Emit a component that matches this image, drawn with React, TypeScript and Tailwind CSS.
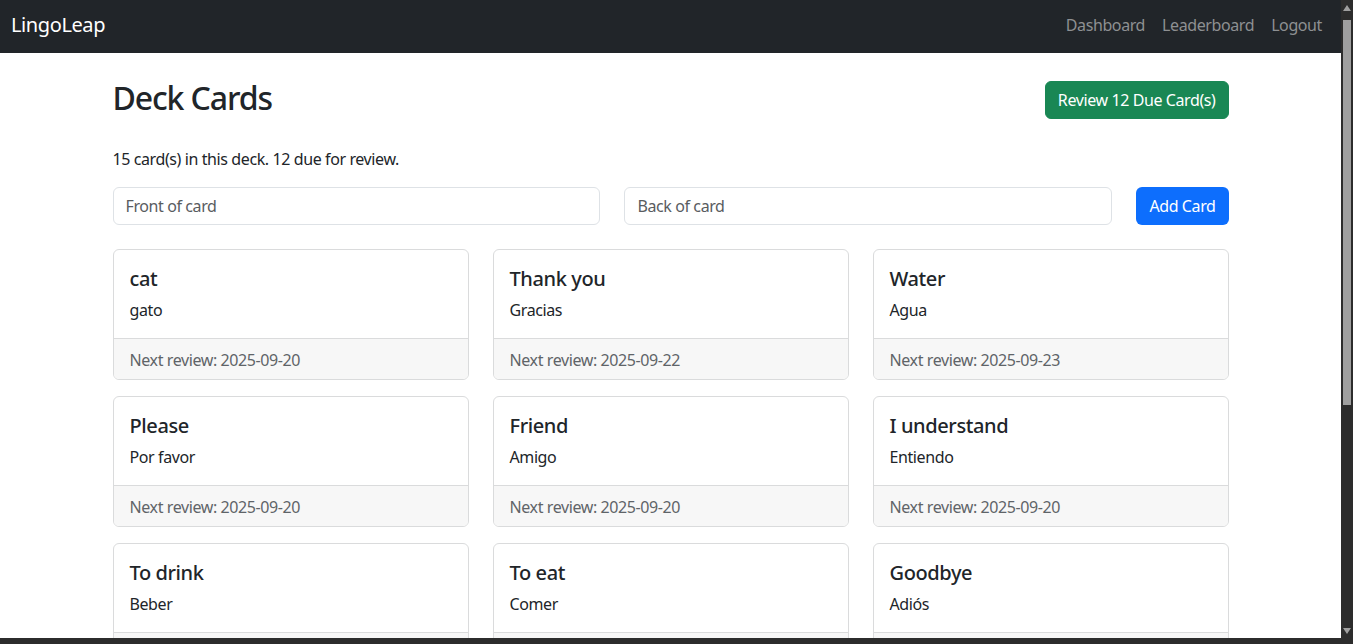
import React from 'react'

type Card = { front: string; back: string; next: string }

const cards: Card[] = [
  { front: 'cat', back: 'gato', next: '2025-09-20' },
  { front: 'Thank you', back: 'Gracias', next: '2025-09-22' },
  { front: 'Water', back: 'Agua', next: '2025-09-23' },
  { front: 'Please', back: 'Por favor', next: '2025-09-20' },
  { front: 'Friend', back: 'Amigo', next: '2025-09-20' },
  { front: 'I understand', back: 'Entiendo', next: '2025-09-20' },
  { front: 'To drink', back: 'Beber', next: '2025-09-20' },
  { front: 'To eat', back: 'Comer', next: '2025-09-20' },
  { front: 'Goodbye', back: 'Adiós', next: '2025-09-20' },
]

function Navbar() {
  return (
    <nav className="h-[53px] bg-[#212529] flex items-center justify-between pl-[11px] pr-[19px] pb-[3px] shrink-0">
      <span className="text-[20px] text-white leading-none">LingoLeap</span>
      <div className="flex items-center gap-[17px] text-[16px] text-[#8e9092]">
        <a>Dashboard</a>
        <a>Leaderboard</a>
        <a>Logout</a>
      </div>
    </nav>
  )
}

function DeckCard({ card }: { card: Card }) {
  return (
    <div className="border border-[#dadbdc] rounded-[6px] overflow-hidden bg-white">
      <div className="p-4">
        <h5 className="text-[20px] font-medium leading-[1.2] mt-[1px] mb-[7px] text-[#212529]">{card.front}</h5>
        <p className="text-[16px] leading-6 text-[#212529]">{card.back}</p>
      </div>
      <div className="border-t border-[#dadbdc] bg-[#f7f7f7] px-4 pt-[9px] pb-[7px] text-[16px] leading-6 text-[#5f6468]">
        Next review: {card.next}
      </div>
    </div>
  )
}

function Scrollbar() {
  return (
    <div className="w-[12px] h-[638px] bg-[#2c2c2c] flex flex-col items-center shrink-0">
      <div className="mt-[5px] w-0 h-0 border-l-[4px] border-r-[4px] border-b-[6px] border-l-transparent border-r-transparent border-b-[#9f9f9f]" />
      <div className="mt-[9px] w-[8px] h-[385px] bg-[#9f9f9f]" />
      <div className="flex-1" />
      <div className="mb-[4px] w-0 h-0 border-l-[4px] border-r-[4px] border-t-[6px] border-l-transparent border-r-transparent border-t-[#9f9f9f]" />
    </div>
  )
}

export default function App() {
  return (
    <div
      className="w-full h-[644px] overflow-hidden flex flex-col tracking-[-0.025em]"
      style={{ fontFamily: '"Segoe UI", "Noto Sans", sans-serif' }}
    >
      <div className="flex flex-1 min-h-0">
        <div className="flex-1 min-w-0 flex flex-col overflow-hidden bg-white">
          <Navbar />
          <main className="w-[1140px] mx-auto px-3 pt-6">
            <div className="flex items-center justify-between mb-6">
              <h1 className="text-[32px] font-medium leading-[1.2] mt-[2px] mb-[6px] text-[#212529] tracking-[-0.035em]">
                Deck Cards
              </h1>
              <button className="bg-[#198754] text-white text-[16px] leading-6 px-3 py-[6px] rounded-[6px] border border-[#198754] tracking-[-0.025em]">
                Review 12 Due Card(s)
              </button>
            </div>
            <p className="text-[16px] leading-6 text-[#212529] mb-4">15 card(s) in this deck. 12 due for review.</p>
            <div className="flex gap-6 mb-6">
              <input
                className="flex-1 min-w-0 h-[38px] border border-[#dee2e6] rounded-[6px] px-3 text-[16px] tracking-[-0.025em] text-[#212529] placeholder:text-[#595c5f] outline-none"
                placeholder="Front of card"
              />
              <input
                className="flex-1 min-w-0 h-[38px] border border-[#dee2e6] rounded-[6px] px-3 text-[16px] tracking-[-0.025em] text-[#212529] placeholder:text-[#595c5f] outline-none"
                placeholder="Back of card"
              />
              <button className="bg-[#0d6efd] text-white text-[16px] leading-6 px-[13px] h-[38px] rounded-[6px] tracking-[-0.025em]">
                Add Card
              </button>
            </div>
            <div className="grid grid-cols-3 gap-x-6 gap-y-4">
              {cards.map((c, i) => (
                <DeckCard key={i} card={c} />
              ))}
            </div>
          </main>
        </div>
        <Scrollbar />
      </div>
      <div className="h-[6px] bg-[#2c2c2c] shrink-0" />
    </div>
  )
}
